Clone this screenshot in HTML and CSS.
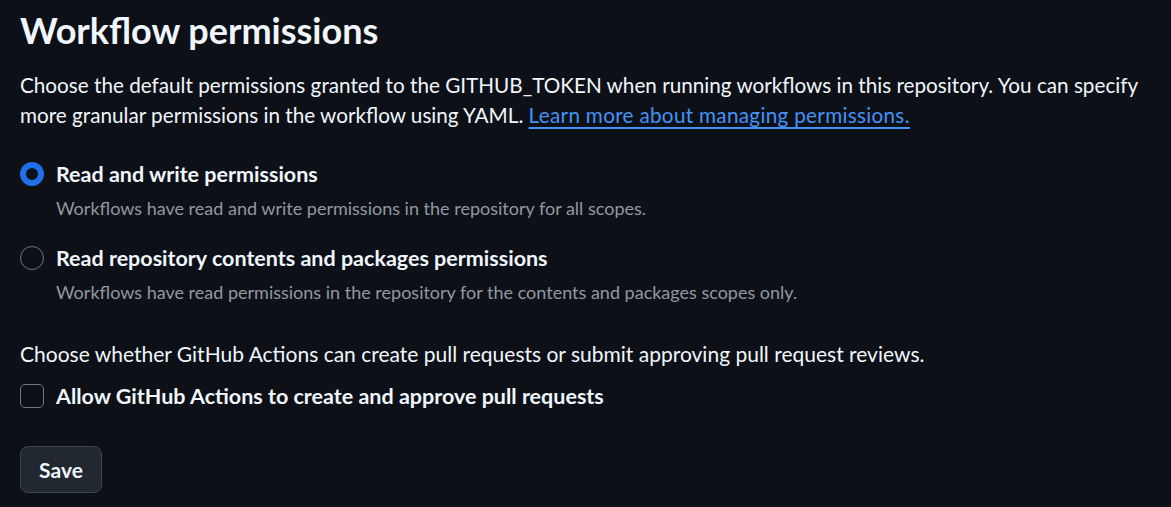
FILE: index.html
```html
<!DOCTYPE html>
<html lang="en">
<head>
<meta charset="utf-8">
<title>Workflow permissions</title>
<link rel="stylesheet" href="styles.css">
</head>
<body>
<main class="page">
  <h1 class="title">Workflow permissions</h1>
  <p class="intro">Choose the default permissions granted to the GITHUB_TOKEN when running workflows in this repository. You can specify more granular permissions in the workflow using YAML. <a class="link" href="#">Learn more about managing permissions.</a></p>

  <div class="options">
    <label class="option">
      <span class="option-row">
        <span class="radio radio-checked"></span>
        <span class="option-label">Read and write permissions</span>
      </span>
      <span class="option-desc">Workflows have read and write permissions in the repository for all scopes.</span>
    </label>
    <label class="option">
      <span class="option-row">
        <span class="radio"></span>
        <span class="option-label">Read repository contents and packages permissions</span>
      </span>
      <span class="option-desc">Workflows have read permissions in the repository for the contents and packages scopes only.</span>
    </label>
  </div>

  <p class="section-text">Choose whether GitHub Actions can create pull requests or submit approving pull request reviews.</p>
  <label class="check-row">
    <span class="checkbox"></span>
    <span class="option-label">Allow GitHub Actions to create and approve pull requests</span>
  </label>

  <button class="btn" type="button">Save</button>
</main>
</body>
</html>
```
FILE: styles.css
```css
* { box-sizing: border-box; }
html, body {
  margin: 0;
  background: #0d1117;
}
body {
  color: #f0f6fc;
  font-family: "Lato", "Noto Sans", sans-serif;
  font-size: 21px;
  line-height: 30px;
}
.page {
  padding: 8px 20px 20px;
  display: flex;
  flex-direction: column;
  align-items: flex-start;
}
.title {
  margin: 0;
  font-size: 36px;
  line-height: 45px;
  font-weight: 700;
  color: #f0f6fc;
}
.intro {
  margin: 17px 0 0;
  font-size: 20.7px;
}
.link {
  color: #4493f8;
  text-decoration: underline;
  text-underline-offset: 4px;
  text-decoration-thickness: 2px;
  letter-spacing: 0.3px;
}
.options {
  margin-top: 29px;
  display: flex;
  flex-direction: column;
  gap: 22px;
}
.option {
  display: flex;
  flex-direction: column;
  gap: 6px;
}
.option-row {
  display: flex;
  align-items: center;
  gap: 12px;
}
.option-label {
  font-weight: 700;
  font-size: 21.5px;
}
.option-desc {
  margin-left: 36px;
  font-size: 18px;
  line-height: 26px;
  color: #9198a1;
}
.radio {
  width: 24px;
  height: 24px;
  border-radius: 50%;
  border: 1.5px solid #6e7681;
  flex: none;
}
.radio-checked {
  border: 6px solid #1f6feb;
  background: #0d1117;
}
.section-text {
  margin: 34px 0 0;
}
.check-row {
  margin-top: 12px;
  display: flex;
  align-items: center;
  gap: 12px;
}
.checkbox {
  width: 24px;
  height: 24px;
  border: 1.5px solid #6e7681;
  border-radius: 5px;
  flex: none;
}
.btn {
  margin-top: 35px;
  width: 82px;
  height: 47px;
  background: #212830;
  border: 1px solid #3d444d;
  border-radius: 8px;
  color: #f0f6fc;
  font-family: inherit;
  font-size: 21px;
  font-weight: 700;
  cursor: pointer;
}
```
